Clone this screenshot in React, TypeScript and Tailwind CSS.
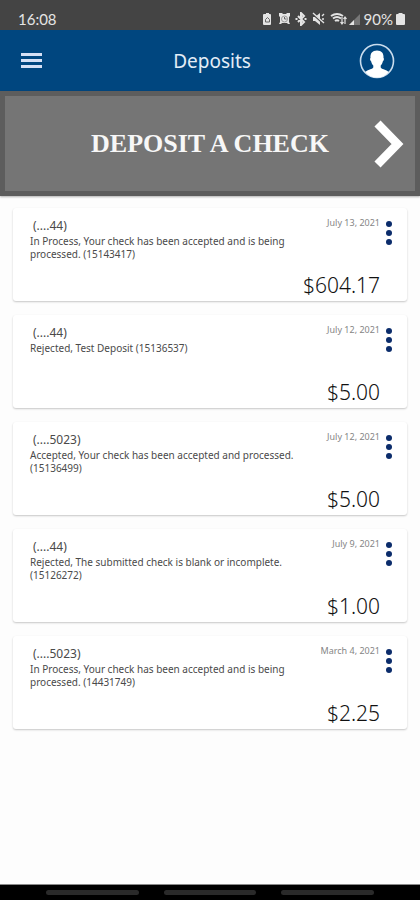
import React from "react";

type Deposit = { account: string; status: string; date: string; amount: string };

const deposits: Deposit[] = [
  { account: "(....44)", status: "In Process, Your check has been accepted and is being processed. (15143417)", date: "July 13, 2021", amount: "$604.17" },
  { account: "(....44)", status: "Rejected, Test Deposit (15136537)", date: "July 12, 2021", amount: "$5.00" },
  { account: "(....5023)", status: "Accepted, Your check has been accepted and processed. (15136499)", date: "July 12, 2021", amount: "$5.00" },
  { account: "(....44)", status: "Rejected, The submitted check is blank or incomplete. (15126272)", date: "July 9, 2021", amount: "$1.00" },
  { account: "(....5023)", status: "In Process, Your check has been accepted and is being processed. (14431749)", date: "March 4, 2021", amount: "$2.25" },
];

function StatusIcons() {
  return (
    <svg width="100" height="14" viewBox="0 0 100 14" fill="none" stroke="#e4e4e4" aria-hidden="true">
      {/* battery saver */}
      <path d="M3 2h1V1h3v1h1q1 0 1 1v9q0 1-1 1H2q-1 0-1-1V3q0-1 1-1z" fill="#e4e4e4" stroke="none" />
      <path d="M3.500 10V7.500L5.500 5.500l2 2V10z" stroke="#666" />
      {/* alarm */}
      <path d="M17 1h3l1 1h3l1-1h3v3l-1 1v5l1 2h-2l-1-1h-5l-1 1h-2l1-2V5l-1-1z" fill="#e4e4e4" stroke="none" />
      <circle cx="22.500" cy="7" r="3" stroke="#999" />
      <path d="M22.500 5v2h2" stroke="#666" />
      {/* bluetooth */}
      <path d="M36 4l6 6-3 3V1l3 3-6 6M33.500 7h2M42.500 7h2" strokeWidth="2" />
      {/* muted speaker */}
      <path d="M51 5h2l5-4v12l-5-4h-2z" fill="#e4e4e4" stroke="none" />
      <path d="M51 2l11 10" stroke="#444" strokeWidth="2" />
      <path d="M51 1l11 10M60 4l2-2M60 7h2" strokeWidth="1.400" />
      {/* wifi and data arrows */}
      <path d="M69 4q6-4 12 0M71 6.500q4-3 8 0M73 9q2-1.500 4 0" strokeWidth="2" />
      <path d="M80 12V5M78.500 10l1.500 2 1.500-2M83 5v7M81.500 7L83 5l1.500 2" strokeWidth="1.200" />
      {/* signal */}
      <path d="M87 13L98 2v11z" fill="#777" stroke="none" />
      <path d="M87 13l5-5v5z" fill="#e4e4e4" stroke="none" />
    </svg>
  );
}

function StatusBar() {
  return (
    <div className="flex h-[30px] items-center justify-between bg-[#444444] pt-[7px] pr-[15px] pl-[18px] font-['Lato',sans-serif] text-[15px] leading-5 text-[#e4e4e4]">
      <span>16:08</span>
      <div className="flex items-center">
        <StatusIcons />
        <span className="ml-0.5">90%</span>
        <svg className="ml-[3px]" width="9" height="12" viewBox="0 0 9 12" fill="#e4e4e4" aria-hidden="true">
          <path d="M2.500 0h4v1H8q1 0 1 1v9q0 1-1 1H1q-1 0-1-1V2q0-1 1-1h1.500z" />
        </svg>
      </div>
    </div>
  );
}

function Header() {
  return (
    <header className="grid h-[61px] grid-cols-[1fr_auto_1fr] items-center bg-[#00467f] pr-[25px] pl-[21px]">
      <button type="button" aria-label="Menu" className="flex w-[21px] flex-col gap-[3px]">
        <span className="h-[3px] bg-[#d5e0f5]" />
        <span className="h-[3px] bg-[#d5e0f5]" />
        <span className="h-[3px] bg-[#d5e0f5]" />
      </button>
      <h1 className="pl-2 text-[19px] leading-6 text-[#e3edf7]">Deposits</h1>
      <button type="button" aria-label="Profile" className="justify-self-end">
        <svg width="36" height="36" viewBox="0 0 36 36">
          <circle cx="18" cy="18" r="16.500" fill="none" stroke="#c9dced" strokeWidth="1.600" />
          <path d="M18 7.500c4.600 0 7 2.900 6.500 7.500.8.300.5 2.500-.6 3.200-.4 2-1.200 3.200-2.200 4.200v2.100c.8 1.800 5.800 2.200 8 4.400C26.500 32.500 22.700 34.500 18 34.500S9.500 32.500 6.300 28.900c2.200-2.200 7.200-2.600 8-4.400v-2.100c-1-1-1.800-2.200-2.200-4.200-1.100-.7-1.400-2.900-.6-3.200-.5-4.600 1.900-7.500 6.500-7.500z" fill="#fff" />
        </svg>
      </button>
    </header>
  );
}

function DepositBanner() {
  return (
    <button type="button" className="grid h-[105px] w-full grid-cols-[1fr_auto_1fr] items-center border-[5px] border-[#5d5d5d] bg-[#757575] px-[11px] shadow-[0_1px_2px_rgba(0,0,0,0.3)]">
      <span />
      <span className="font-['Liberation_Serif',serif] text-[26px] leading-8 font-bold text-[#f7f7f7]">DEPOSIT A CHECK</span>
      <svg className="justify-self-end" width="30" height="48" viewBox="0 0 30 48" fill="none" stroke="#fff" strokeWidth="8.500" aria-hidden="true">
        <path d="M3.500 3.500L23.500 24l-20 20.500" />
      </svg>
    </button>
  );
}

function DepositCard({ account, status, date, amount }: Deposit) {
  return (
    <li className="flex h-[93px] justify-between rounded-[3px] bg-white pt-[9px] pr-[15px] pl-[17px] shadow-[0_1px_2px_rgba(0,0,0,0.22)]">
      <div className="w-[275px] text-[#4a4a4a]">
        <p className="pl-[3px] text-[12px] leading-[18px]">{account}</p>
        <p className="text-[10px] leading-[13px]">{status}</p>
      </div>
      <div className="flex gap-[6px]">
        <div className="-ml-8 flex flex-col items-end justify-between pb-[3px]">
          <time className="text-[9px] leading-3 whitespace-nowrap text-[#858585]">{date}</time>
          <span className="text-[21px] leading-[26px] font-light text-[#111111]">{amount}</span>
        </div>
        <button type="button" aria-label="Deposit options" className="mt-1 flex h-6 flex-col items-center gap-[3px]">
          <span className="size-[6px] rounded-full bg-[#0b2c6b]" />
          <span className="size-[6px] rounded-full bg-[#0b2c6b]" />
          <span className="size-[6px] rounded-full bg-[#0b2c6b]" />
        </button>
      </div>
    </li>
  );
}

function NavigationBar() {
  return (
    <div className="flex h-4 items-center justify-center gap-[25px] border-t border-[#8a8a8a] bg-black px-[46px]">
      <span className="h-[5px] flex-1 rounded-full bg-[#2a2a2a]" />
      <span className="h-[5px] flex-1 rounded-full bg-[#2a2a2a]" />
      <span className="h-[5px] flex-1 rounded-full bg-[#2a2a2a]" />
    </div>
  );
}

export default function App() {
  return (
    <div className="flex min-h-screen flex-col bg-[#fdfdfd] font-['Noto_Sans','Open_Sans',sans-serif]">
      <StatusBar />
      <Header />
      <main className="flex-1">
        <DepositBanner />
        <ul className="flex flex-col gap-[14px] px-[13px] pt-3">
          {deposits.map((deposit, i) => (
            <DepositCard key={i} {...deposit} />
          ))}
        </ul>
      </main>
      <NavigationBar />
    </div>
  );
}
